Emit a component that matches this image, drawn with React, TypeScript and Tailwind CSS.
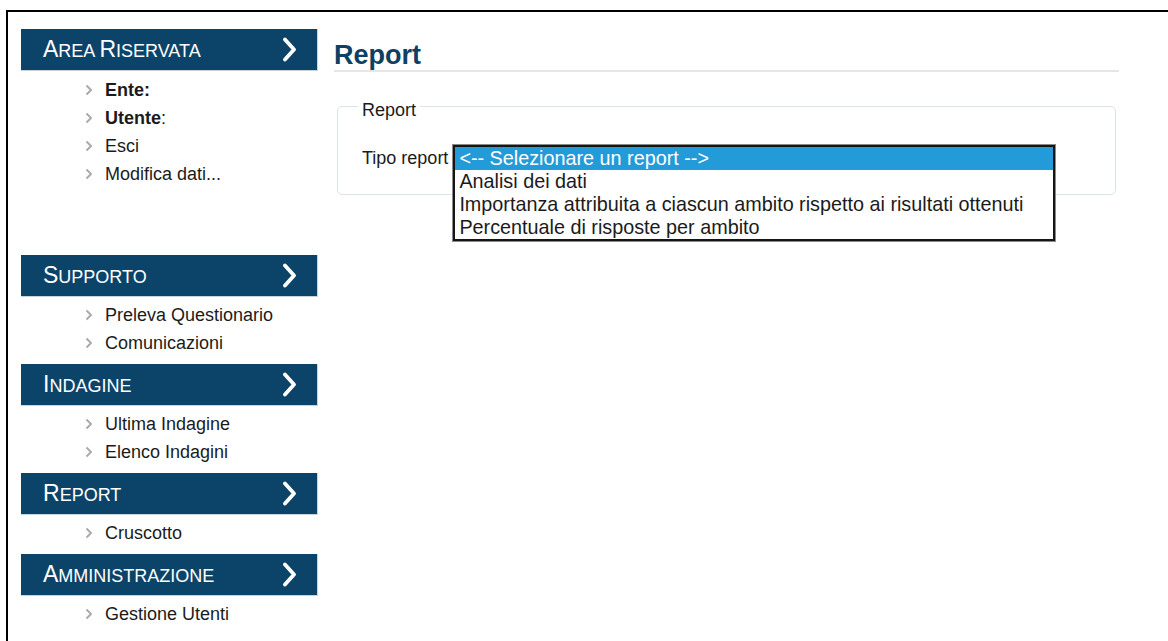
import React from 'react';

type Section = {
  title: string;
  items: { label: string; bold?: boolean }[];
  extraSpace?: boolean;
};

const sections: Section[] = [
  {
    title: 'Area Riservata',
    items: [{ label: 'Ente:', bold: true }, { label: 'Utente', bold: true }, { label: 'Esci' }, { label: 'Modifica dati...' }],
    extraSpace: true,
  },
  { title: 'Supporto', items: [{ label: 'Preleva Questionario' }, { label: 'Comunicazioni' }] },
  { title: 'Indagine', items: [{ label: 'Ultima Indagine' }, { label: 'Elenco Indagini' }] },
  { title: 'Report', items: [{ label: 'Cruscotto' }] },
  { title: 'Amministrazione', items: [{ label: 'Gestione Utenti' }] },
];

const reportOptions = [
  '<-- Selezionare un report -->',
  'Analisi dei dati',
  'Importanza attribuita a ciascun ambito rispetto ai risultati ottenuti',
  'Percentuale di risposte per ambito',
];

// first letter of each word big, the rest in smaller capitals
const SmallCaps: React.FC<{ text: string }> = ({ text }) => (
  <span>
    {text.split(' ').map((w, i) => (
      <React.Fragment key={i}>
        {i > 0 && <span className="text-[18px]"> </span>}
        <span className="text-[23px]">{w[0].toUpperCase()}</span>
        <span className="text-[18px]">{w.slice(1).toUpperCase()}</span>
      </React.Fragment>
    ))}
  </span>
);

const BigChevron = () => (
  <svg width="15" height="25" viewBox="0 0 15 25" fill="none">
    <polyline points="3,2.5 12,12.5 3,22.5" stroke="white" strokeWidth="3.8" strokeLinecap="round" strokeLinejoin="round" />
  </svg>
);

const SmallChevron = () => (
  <svg width="8" height="12" viewBox="0 0 8 12" fill="none">
    <polyline points="1.5,1.5 6,6 1.5,10.5" stroke="#ababab" strokeWidth="2" strokeLinejoin="round" />
  </svg>
);

const Sidebar: React.FC = () => (
  <div className="w-[297px] shrink-0 pt-[17px]">
    {sections.map((s) => (
      <div key={s.title}>
        <div className="flex h-[42px] items-center justify-between bg-[#0b4468] pl-[22px] pr-[20px] text-white border-b border-r border-[#c9d3dc]">
          <SmallCaps text={s.title} />
          <BigChevron />
        </div>
        <ul className={s.extraSpace ? 'pt-[5px] pb-[67px]' : 'pt-[4px] pb-[7px]'}>
          {s.items.map((it) => (
            <li key={it.label} className="flex h-[28px] items-center pl-[64px] text-[18px] text-[#1b1b1b]">
              <SmallChevron />
              <span className="ml-[12px]">
                {it.label === 'Utente' ? (
                  <>
                    <b>Utente</b>:
                  </>
                ) : it.bold ? (
                  <b>{it.label}</b>
                ) : (
                  it.label
                )}
              </span>
            </li>
          ))}
        </ul>
      </div>
    ))}
  </div>
);

const ReportPanel: React.FC = () => (
  <div className="w-[785px] pt-[28px]">
    <h1 className="border-b-2 border-[#e6e6e6] text-[27px] font-bold leading-[30px] text-[#0d4063]">Report</h1>
    <fieldset className="mx-[3px] mt-[20px] rounded-[5px] border border-[#dbe3ea] pl-[20px] pb-[22px] pt-[25px]">
      <legend className="px-[4px] pt-[8px] text-[18px] leading-[20px] text-[#1b1b1b]">Report</legend>
      <div className="flex items-center pl-[4px]">
        <span className="text-[18px] text-[#1b1b1b]">Tipo report</span>
        <div className="relative ml-[5px] h-[24px] w-[602px]">
          {/* opened drop-down list */}
          <ul className="absolute left-0 top-[-2px] z-10 w-[602px] border-2 border-[#151515] bg-white shadow-[0_0_0_1px_#8a8a8a]">
            {reportOptions.map((o, i) => (
              <li
                key={o}
                className={
                  i === 0
                    ? 'h-[23px] bg-[#249bd9] px-[4px] text-[19.8px] leading-[23px] text-white'
                    : 'h-[23px] px-[4px] text-[19.8px] leading-[23px] text-[#1b1b1b]'
                }
              >
                {o}
              </li>
            ))}
          </ul>
        </div>
      </div>
    </fieldset>
  </div>
);

export default function App() {
  return (
    <div className="flex min-h-screen flex-col bg-white pl-[6px] pt-[10px] font-['Liberation_Sans',Arial,sans-serif]">
      <div className="flex flex-1 gap-[16px] border-l-2 border-t-2 border-black pl-[13px]">
        <Sidebar />
        <ReportPanel />
      </div>
    </div>
  );
}
